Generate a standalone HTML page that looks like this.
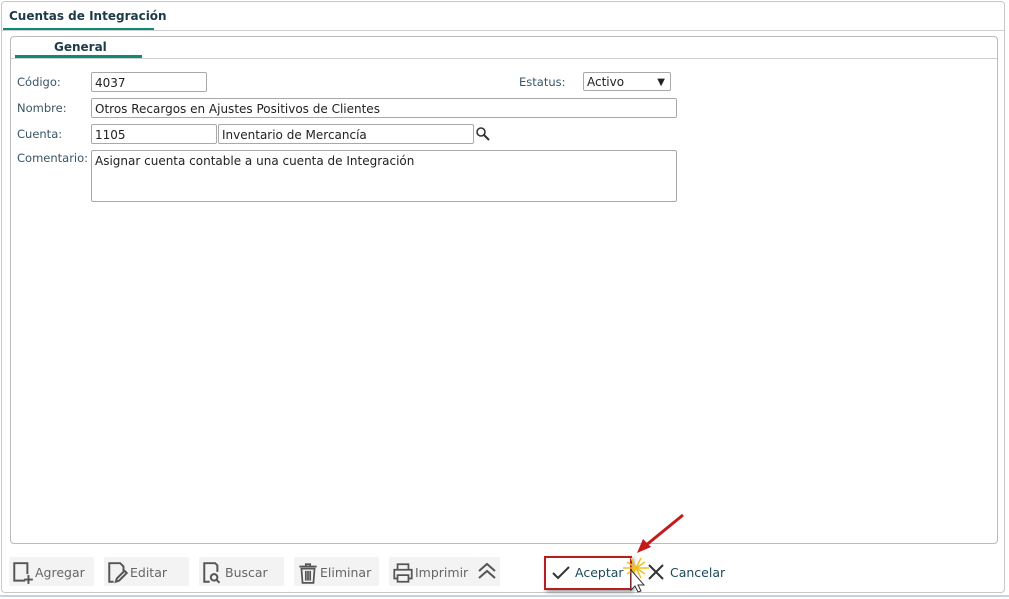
<!DOCTYPE html>
<html><head><meta charset="utf-8"><style>
*{box-sizing:border-box;margin:0;padding:0}
body{width:1009px;height:599px;background:#fff;font-family:Verdana,"DejaVu Sans",sans-serif;position:relative;overflow:hidden;color:#333}
.a{position:absolute}
.outer{left:1px;top:1px;width:1004px;height:592px;border:1px solid #c8c8c8;border-radius:4px}
.lbl{font-size:11.5px;color:#3a5566}
.inp{border:1px solid #a9a9a9;border-radius:2px;font-size:12px;color:#222;padding:3px 3px 0;line-height:15px;background:#fff}
.btn{top:557px;width:85px;height:29px;background:#f3f3f3;border-radius:2px;font-size:12.5px;color:#666;line-height:31px;padding-left:26px}
.btn svg{position:absolute;left:2px;top:4px}
</style></head><body>
<div class="a outer"></div>
<div class="a" style="left:9px;top:9px;font-size:12px;font-weight:bold;color:#1d3a48">Cuentas de Integración</div>
<div class="a" style="left:3px;top:28px;width:151px;height:3px;background:#0f8a78"></div>
<div class="a" style="left:2px;top:30px;width:1002px;height:1px;background:#d0d0d0"></div>
<div class="a" style="left:10px;top:36px;width:988px;height:508px;border:1px solid #bbb;border-radius:4px"></div>
<div class="a" style="left:54px;top:40px;font-size:12px;font-weight:bold;color:#1d3a48">General</div>
<div class="a" style="left:15px;top:55px;width:127px;height:3px;background:#0f8a78"></div>
<div class="a" style="left:11px;top:58px;width:986px;height:1px;background:#d0d0d0"></div>

<div class="a lbl" style="left:17px;top:75px">Código:</div>
<div class="a inp" style="left:91px;top:72px;width:116px;height:20px">4037</div>
<div class="a lbl" style="left:519px;top:75px">Estatus:</div>
<div class="a inp" style="left:583px;top:72px;width:88px;height:19px;padding-top:2px">Activo<span style="position:absolute;right:5px;top:2px;font-size:10px">▼</span></div>
<div class="a lbl" style="left:17px;top:101px">Nombre:</div>
<div class="a inp" style="left:91px;top:98px;width:586px;height:20px">Otros Recargos en Ajustes Positivos de Clientes</div>
<div class="a lbl" style="left:17px;top:127px">Cuenta:</div>
<div class="a inp" style="left:91px;top:124px;width:126px;height:20px">1105</div>
<div class="a inp" style="left:218px;top:124px;width:256px;height:20px">Inventario de Mercancía</div>
<svg class="a" style="left:475px;top:126px" width="16" height="16" viewBox="0 0 16 16"><circle cx="6" cy="6" r="4" fill="none" stroke="#333" stroke-width="1.6"/><line x1="9" y1="9" x2="14" y2="14" stroke="#333" stroke-width="2"/></svg>
<div class="a lbl" style="left:17px;top:151px">Comentario:</div>
<div class="a inp" style="left:91px;top:150px;width:586px;height:52px">Asignar cuenta contable a una cuenta de Integración</div>

<div class="a btn" style="left:9px"><svg width="24" height="24" viewBox="0 0 22 22" fill="none" stroke="#555" stroke-width="1.8"><path d="M13 18H3V2h12v10"/><path d="M16 13v8M12 17h8"/></svg>Agregar</div>
<div class="a btn" style="left:104px"><svg width="24" height="24" viewBox="0 0 22 22" fill="none" stroke="#555" stroke-width="1.8"><path d="M7 19H3V2h10l3 3v4"/><path d="M9 19l1-3 7-7 2 2-7 7z"/></svg>Editar</div>
<div class="a btn" style="left:199px"><svg width="24" height="24" viewBox="0 0 22 22" fill="none" stroke="#555" stroke-width="1.8"><path d="M8 19H3V2h10l2 2v6"/><circle cx="12" cy="15" r="3"/><path d="M14 17l3 3"/></svg>Buscar</div>
<div class="a btn" style="left:294px"><svg width="24" height="24" viewBox="0 0 22 22" fill="none" stroke="#555" stroke-width="1.6"><path d="M3 5h16M9 5V3h4v2M5 7h12l-1 13H6z"/><path d="M9 9v9M11 9v9M13 9v9"/></svg>Eliminar</div>
<div class="a btn" style="left:389px"><svg width="24" height="24" viewBox="0 0 22 22" fill="none" stroke="#555" stroke-width="1.6"><path d="M6 8V3h10v5M6 16H3V8h16v8h-3M6 13h10v6H6z"/></svg>Imprimir</div>
<div class="a" style="left:474px;top:557px;width:26px;height:29px;background:#f3f3f3"><svg width="26" height="29" viewBox="0 0 26 29" fill="none" stroke="#555" stroke-width="2"><path d="M5 14l8-7 8 7M5 21l8-7 8 7"/></svg></div>

<div class="a" style="left:544px;top:556px;width:88px;height:34px;border:2px solid #b41e1e;box-shadow:2px 2px 4px rgba(0,0,0,.4)"></div>
<svg class="a" style="left:551px;top:563px" width="20" height="20" viewBox="0 0 20 20"><path d="M2 10l5 5L18 4" fill="none" stroke="#333" stroke-width="2"/></svg>
<div class="a" style="left:575px;top:565px;font-size:12.5px;color:#1d4a5a">Aceptar</div>
<svg class="a" style="left:647px;top:563px" width="18" height="18" viewBox="0 0 18 18"><path d="M2 2l14 14M16 2L2 16" stroke="#333" stroke-width="2"/></svg>
<div class="a" style="left:670px;top:565px;font-size:12.5px;color:#1d4a5a">Cancelar</div>
<svg class="a" style="left:615px;top:510px" width="75" height="85" viewBox="0 0 75 85">
<path d="M68 5L30 36" stroke="#c41a1a" stroke-width="3"/><path d="M22 43l6-14 8 8z" fill="#c41a1a"/>
<g stroke="#f0c020" stroke-width="1.5"><path d="M16 48l10 20M26 48l-10 20M8 58h26M12 52l18 12M30 52l-18 12"/></g>
<path d="M16 60v20l4-4 3 6 3-1-3-6h6z" fill="#fff" stroke="#333" stroke-width="1"/></svg>
<div class="a" style="left:0;top:595px;width:1009px;height:2px;background:#c5d3e0"></div>
</body></html>
